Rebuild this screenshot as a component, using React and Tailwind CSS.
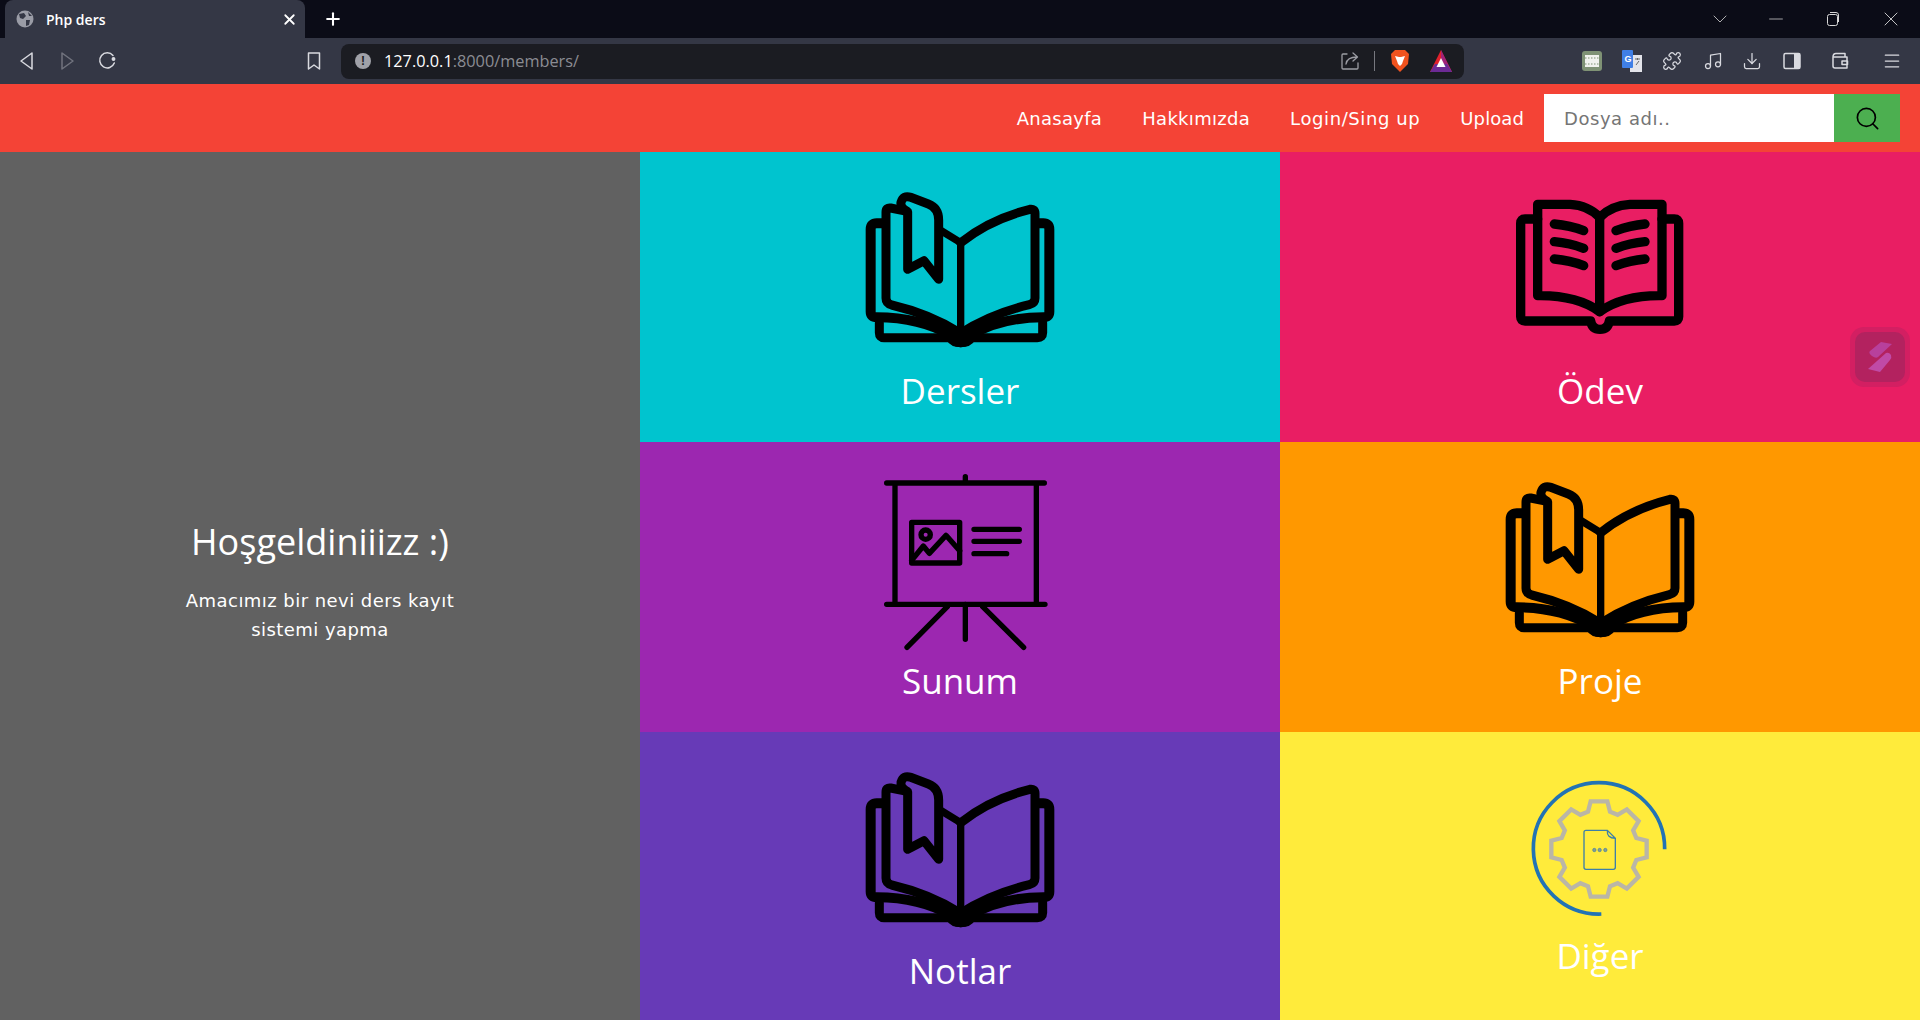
import { Search, X, Plus, Minus, ChevronDown, Download, Music, Puzzle, Menu } from 'lucide-react';

// open book with bookmark, coordinates follow a 720x570 box
function BookmarkBook() {
  return (
    <svg width="240" height="190" viewBox="0 0 720 570" fill="none" stroke="#000" strokeWidth="27" strokeLinejoin="round" strokeLinecap="round">
      <path d="M300 180 L362 218 V485" strokeWidth="22" />
      <path d="M362 218 Q450 148 570 118 Q585 116 585 130 V385 Q585 400 568 404 Q450 432 362 490" />
      <path d="M190 122 L152 114 Q138 112 138 126 V385 Q138 400 155 405 Q270 432 362 490" />
      <path d="M203 298 V125 Q180 112 183 97 Q190 74 212 82 L265 102 Q296 114 296 150 V328 L252 272 Z" />
      <path d="M128 160 H110 Q92 160 92 178 V425 Q92 442 110 442 Q240 442 335 497" strokeWidth="30" />
      <path d="M592 160 H610 Q628 160 628 178 V425 Q628 442 610 442 Q480 442 390 497" strokeWidth="30" />
      <path d="M118 458 V488 Q118 503 132 503 H330 Q340 518 362 518 Q385 518 395 503 H592 Q608 503 608 488 V458" />
      <path d="M335 497 Q362 478 390 497 Q385 518 362 518 Q340 518 335 497 Z" fill="#000" />
    </svg>
  );
}

function OpenBook() {
  return (
    <svg width="220" height="170" viewBox="0 0 660 510" fill="none" stroke="#000" strokeWidth="28" strokeLinejoin="round" strokeLinecap="round">
      <path d="M143 73 H240 Q295 76 329 112 Q365 76 420 73 H516 V347 Q400 345 329 395 Q260 345 143 347 Z" />
      <path d="M329 112 V395" />
      <path d="M143 117 H105 Q92 117 92 130 V410 Q92 423 105 423 H302 Q306 448 330 448 Q354 448 358 423 H553 Q566 423 566 410 V130 Q566 117 553 117 H516" />
      <path d="M193 132 Q240 136 281 152 M193 185 Q240 189 281 205 M193 237 Q240 241 281 257" />
      <path d="M378 152 Q420 136 465 132 M378 205 Q420 189 465 185 M378 257 Q420 241 465 237" />
    </svg>
  );
}

function Board() {
  return (
    <svg width="220" height="200" viewBox="0 0 660 600" fill="none" stroke="#000" strokeLinecap="round" strokeLinejoin="round">
      <g strokeWidth="16">
        <path d="M80 69 H553 M80 433 H555 M316 50 V69 M105 69 V433 M529 69 V433" />
        <path d="M316 433 V538 M262 440 L141 562 M368 440 L491 562" />
        <path d="M155 187 H299 V309 H155 Z" />
        <path d="M155 301 L190 258 L208 280 L258 226 L299 272" />
        <circle cx="197" cy="224" r="14" />
      </g>
      <path d="M342 208 H478 M342 244 H478 M342 281 H440" strokeWidth="16" />
    </svg>
  );
}

// 8 toothed gear outline around the little file icon
function gearPoints() {
  const cx = 267, cy = 237, pts = [];
  for (let i = 0; i < 8; i++) {
    const a = (i * Math.PI) / 4 - Math.PI / 2;
    const ux = Math.cos(a), uy = Math.sin(a), vx = -uy, vy = ux;
    [[112, -33], [143, -25], [143, 25], [112, 33]].forEach(([r, w]) => {
      pts.push(`${(cx + ux * r + vx * w).toFixed(1)},${(cy + uy * r + vy * w).toFixed(1)}`);
    });
  }
  return pts.join(' ');
}

function GearFile() {
  return (
    <svg width="170" height="160" viewBox="0 0 510 480" fill="none">
      <path d="M464 238 A197 197 0 1 0 274 432" stroke="#2273b4" strokeWidth="11" />
      <polygon points={gearPoints()} stroke="#bab6a6" strokeWidth="13" />
      <path d="M292 181 H228 Q222 181 222 187 V292 Q222 298 228 298 H310 Q316 298 316 292 V205 Z M292 181 Q290 205 316 205" stroke="#3d7fa8" strokeWidth="4" />
      <g fill="#8a9d8c" stroke="#3d7fa8" strokeWidth="2">
        <circle cx="253" cy="240" r="5" />
        <circle cx="269" cy="240" r="5" />
        <circle cx="286" cy="240" r="5" />
      </g>
    </svg>
  );
}

function Tile({ bg, className, label, labelClass, children }) {
  return (
    <div className={`flex flex-col items-center ${bg} ${className}`}>
      {children}
      <h2 className={`h-[50px] text-[35px] leading-[50px] text-white font-['Open_Sans',sans-serif] ${labelClass || ''}`}>{label}</h2>
    </div>
  );
}

function BrowserChrome() {
  return (
    <div className="shrink-0">
      {/* tab strip */}
      <div className="flex h-[38px] items-end bg-[#0b0c17] pl-[5px] text-white">
        <div className="flex h-[38px] w-[300px] items-center rounded-t-lg bg-[#343745] pl-[11px]">
          <svg width="18" height="18" viewBox="0 0 18 18" className="shrink-0">
            <circle cx="9" cy="9" r="8.5" fill="#9a9ca6" />
            <path d="M3 4 L8 3 L10 6 L7 9 L4 8 Z M10 10 L14 10 L13 15 L10 16 Z M12 2 L16 6 L13 6 Z" fill="#343745" />
          </svg>
          <span className="ml-[12px] text-[14px] font-semibold font-['Open_Sans',sans-serif]">Php ders</span>
          <X size={17} strokeWidth={2.5} className="ml-auto mr-[7px]" />
        </div>
        <Plus size={20} strokeWidth={2.5} className="mb-[9px] ml-[18px]" />
        <div className="ml-auto flex h-[38px] items-center text-[#d8d8d8]">
          <ChevronDown size={24} strokeWidth={0.8} className="mr-[33px]" />
          <Minus size={22} strokeWidth={0.8} className="mr-[39px]" />
          <svg width="14" height="16" viewBox="0 0 14 16" fill="none" stroke="currentColor" className="mr-[39px]">
            <rect x="1.5" y="3.5" width="10" height="11" rx="2" />
            <path d="M4 1.5 H10 Q12.5 1.5 12.5 4 V11" />
          </svg>
          <X size={24} strokeWidth={0.9} className="mr-[17px]" />
        </div>
      </div>
      {/* toolbar */}
      <div className="flex h-[46px] items-center bg-[#343745] text-[#d9dae0]">
        <svg width="20" height="20" viewBox="0 0 20 20" fill="none" stroke="currentColor" strokeWidth="1.5" strokeLinejoin="round" className="ml-[17px]">
          <path d="M15 2 L4 10 L15 18 Z" />
        </svg>
        <svg width="20" height="20" viewBox="0 0 20 20" fill="none" stroke="#71737e" strokeWidth="1.5" strokeLinejoin="round" className="ml-[20px]">
          <path d="M5 2 L16 10 L5 18 Z" />
        </svg>
        <svg width="20" height="20" viewBox="0 0 20 20" fill="none" stroke="currentColor" strokeWidth="1.5" strokeLinecap="round" className="ml-[20px]">
          <path d="M16 4.5 A7.5 7.5 0 1 0 17.3 12" />
          <circle cx="16.5" cy="8" r="1.2" fill="currentColor" />
        </svg>
        <svg width="20" height="20" viewBox="0 0 20 20" fill="none" stroke="currentColor" strokeWidth="1.5" strokeLinejoin="round" className="ml-[187px]">
          <path d="M4.5 2 H15.5 V18 L10 14 L4.5 18 Z" />
        </svg>
        {/* address bar */}
        <div className="ml-[17px] flex h-[35px] w-[1123px] items-center rounded-lg bg-[#1b1c22] pl-[14px]">
          <span className="flex h-[16px] w-[16px] items-center justify-center rounded-full bg-[#a0a1a8] text-[12px] font-bold leading-none text-[#1b1c22] font-['Liberation_Sans',sans-serif]">!</span>
          <span className="ml-[13px] text-[16.3px] text-white font-['Open_Sans',sans-serif]">127.0.0.1<span className="text-[#8b8c93]">:8000/members/</span></span>
          <svg width="20" height="20" viewBox="0 0 20 20" fill="none" stroke="#9c9da4" strokeWidth="1.3" strokeLinecap="round" strokeLinejoin="round" className="ml-auto">
            <path d="M7 3 H3 Q2 3 2 4 V17 Q2 18 3 18 H17 Q18 18 18 17 V12" />
            <path d="M6 13 Q7 6 17 6 M13 2 L17.5 6 L13 10" />
          </svg>
          <div className="ml-[14px] h-[20px] w-px bg-[#77787f]" />
          <svg width="20" height="24" viewBox="0 0 20 24" className="ml-[15px]">
            <path d="M5 1 H15 L19 5 L18 15 L10 23 L2 15 L1 5 Z" fill="#f1531f" />
            <path d="M5 7 L9 8 H11 L15 7 L13 12 L12 15 L10 17 L8 15 L7 12 Z" fill="#fff" />
          </svg>
          <svg width="24" height="24" viewBox="0 0 24 24" className="ml-[19px] mr-[11px]">
            <path d="M12 1 L23 23 H1 Z" fill="#e0212c" />
            <path d="M12 1 L23 23 L12 17 Z" fill="#a1237a" />
            <path d="M1 23 L6 15 H18 L23 23 Z" fill="#6c2a95" />
            <path d="M12 9 L16.5 18 H7.5 Z" fill="#fff" />
          </svg>
        </div>
        <svg width="20" height="20" viewBox="0 0 20 20" className="ml-[118px]">
          <rect width="20" height="20" rx="3" fill="#7f9275" />
          <rect x="3" y="4" width="14" height="12" fill="#f1f2ee" />
          <path d="M3 7 H17 M3 13 H17" stroke="#7f9275" strokeWidth="1" strokeDasharray="1.5 1.5" />
        </svg>
        <svg width="20" height="24" viewBox="0 0 20 24" className="ml-[20px]">
          <rect x="8" y="6" width="12" height="17" fill="#e3e4ea" />
          <path d="M13 10 H18 M15.5 9 V11 M14 16 L17 12" stroke="#666" strokeWidth="1" />
          <rect width="11" height="18" y="1" rx="1" fill="#3f7fe6" />
          <text x="2.5" y="13" fontSize="9" fontWeight="700" fill="#fff" fontFamily="Liberation Sans">G</text>
        </svg>
        <Puzzle size={20} strokeWidth={1.5} className="ml-[20px]" />
        <Music size={20} strokeWidth={1.5} className="ml-[21px]" />
        <Download size={20} strokeWidth={1.5} className="ml-[19px]" />
        <svg width="20" height="20" viewBox="0 0 20 20" className="ml-[20px]">
          <rect x="2" y="2.5" width="16" height="15" rx="1.5" fill="none" stroke="currentColor" strokeWidth="1.5" />
          <rect x="12" y="2.5" width="6" height="15" fill="currentColor" />
        </svg>
        <svg width="20" height="20" viewBox="0 0 20 20" fill="none" stroke="currentColor" strokeWidth="1.5" strokeLinejoin="round" className="ml-[28px]">
          <path d="M3 6 Q3 2.5 6 2.5 H15 V6 M3 6 H17 V17 H5 Q3 17 3 15 Z M12 10 H17.5 V13.5 H12 Z" />
        </svg>
        <Menu size={20} strokeWidth={1.5} className="ml-[32px]" />
      </div>
    </div>
  );
}

export default function App() {
  return (
    <div className="relative flex h-screen flex-col overflow-hidden bg-[#616161]">
      <BrowserChrome />

      {/* nav */}
      <div className="flex h-[68px] shrink-0 items-center justify-end bg-[#f44336] pr-[20px] text-[18px] tracking-[0.3px] text-white font-['DejaVu_Sans',sans-serif]">
        <a className="mr-[40px]">Anasayfa</a>
        <a className="mr-[40px]">Hakkımızda</a>
        <a className="mr-[40px] tracking-[0.6px]">Login/Sing up</a>
        <a className="mr-[20px] tracking-[0.1px]">Upload</a>
        <input
          placeholder="Dosya adı.."
          className="h-[48px] w-[290px] bg-white px-[20px] text-[18px] tracking-[0.55px] text-black outline-none placeholder:text-[#757575]"
        />
        <button className="flex h-[48px] w-[66px] items-center justify-center bg-[#4caf50] text-black">
          <Search size={27} strokeWidth={1.5} />
        </button>
      </div>

      <div className="grid min-h-0 flex-1 grid-cols-3 grid-rows-[290px_290px_288px]">
        <div className="row-span-3 flex flex-col items-center justify-center bg-[#616161] pb-[12px] text-white">
          <h2 className="mt-[1px] text-[36px] leading-[50px] font-['Open_Sans',sans-serif]">Hoşgeldiniiizz :)</h2>
          <p className="mt-[19px] w-[300px] text-center text-[18px] leading-[29px] tracking-[0.45px] font-['DejaVu_Sans',sans-serif]">Amacımız bir nevi ders kayıt sistemi yapma</p>
        </div>
        <Tile bg="bg-[#00c4cf]" className="pt-[18px]" label="Dersler" labelClass="mt-[6px]">
          <BookmarkBook />
        </Tile>
        <Tile bg="bg-[#e91e63]" className="pt-[28px]" label="Ödev" labelClass="mt-[16px]">
          <OpenBook />
        </Tile>
        <Tile bg="bg-[#9c27b0]" className="pt-[18px]" label="Sunum" labelClass="mt-[-4px]">
          <div className="ml-[20px]"><Board /></div>
        </Tile>
        <Tile bg="bg-[#ff9800]" className="pt-[18px]" label="Proje" labelClass="mt-[6px]">
          <BookmarkBook />
        </Tile>
        <Tile bg="bg-[#673ab7]" className="pt-[18px]" label="Notlar" labelClass="mt-[6px]">
          <BookmarkBook />
        </Tile>
        <Tile bg="bg-[#ffeb3b]" className="pt-[38px]" label="Diğer" labelClass="mt-[1px]">
          <div className="mr-[10px]"><GearFile /></div>
        </Tile>
      </div>

      {/* floating extension button */}
      <div className="absolute left-[1850px] top-[327px] flex h-[60px] w-[60px] items-center justify-center rounded-[14px] bg-[#d31f62]">
        <div className="flex h-[50px] w-[50px] items-center justify-center rounded-[10px] bg-[#b3225f]">
          <svg width="26" height="32" viewBox="0 0 26 32">
            <path d="M14 1 L25 3 L11 16 Q9 18 5 15 Q1 12 3 10 Z" fill="#b8409c" />
            <path d="M19 12 Q22 11 24 14 Q25 17 23 19 L13 31 L1 28 Z" fill="#c04aa6" />
          </svg>
        </div>
      </div>
    </div>
  );
}
